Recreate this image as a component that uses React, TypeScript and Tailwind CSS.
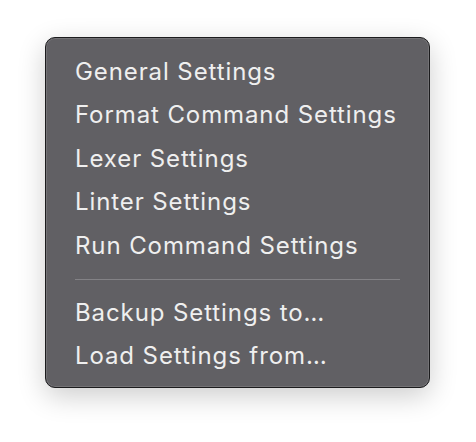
const groups = [
  ["General Settings", "Format Command Settings", "Lexer Settings", "Linter Settings", "Run Command Settings"],
  ["Backup Settings to…", "Load Settings from…"],
];

export default function App() {
  return (
    <div className="w-[476px] h-[442px] bg-white relative" style={{ fontFamily: "Inter, 'Noto Sans', sans-serif" }}>
      <div className="absolute left-[45px] top-[37px] w-[385px] h-[351px] rounded-[10px] bg-[#616064] border border-[#1c1c1e] shadow-[0_8px_28px_rgba(0,0,0,0.2),inset_0_0_0_1px_rgba(255,255,255,0.12)] pt-[12px] pb-[10px] px-[29px]">
        {groups.map((items, gi) => (
          <div key={gi}>
            {gi > 0 && <div className="my-[11px] h-[1.5px] bg-[#838286]" />}
            {items.map((label) => (
              <div key={label} className="h-[43.5px] flex items-center text-[24px] text-[#efefef] tracking-[0.9px]">
                {label}
              </div>
            ))}
          </div>
        ))}
      </div>
    </div>
  );
}
